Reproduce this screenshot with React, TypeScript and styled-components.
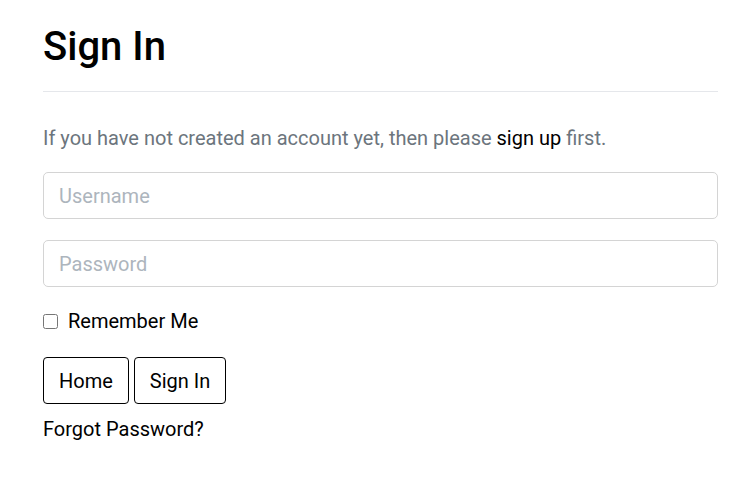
import React from "react";
import styled, { createGlobalStyle } from "styled-components";

const GlobalStyle = createGlobalStyle`
  body {
    margin: 0;
    background: #fff;
    font-family: Roboto, "Liberation Sans", sans-serif;
    font-size: 20px;
    line-height: 1.5;
    color: #212529;
  }
`;

const Page = styled.main`
  padding: 23px 28px 0 43px;
`;

const Header = styled.header`
  border-bottom: 1px solid #e5e7eb;
  padding-bottom: 20px;
`;

const Title = styled.h1`
  margin: 0;
  font-size: 40px;
  font-weight: 500;
  line-height: 1.2;
  color: #000;
`;

const Lead = styled.p`
  margin: 31px 0 19px;
  color: #6c757d;
`;

const Link = styled.a`
  color: #000;
  text-decoration: none;
`;

const Form = styled.form`
  display: flex;
  flex-direction: column;
`;

const Input = styled.input`
  box-sizing: border-box;
  height: 47px;
  padding: 0 15px;
  border: 1px solid #d4d4d4;
  border-radius: 5px;
  font: inherit;
  color: #212529;
  & + & {
    margin-top: 21px;
  }
  &::placeholder {
    color: #adb5bd;
  }
`;

const CheckRow = styled.label`
  display: flex;
  align-items: center;
  gap: 10px;
  margin-top: 19px;
  color: #000;
`;

const Check = styled.input`
  margin: 0;
  width: 15px;
  height: 15px;
`;

const Buttons = styled.div`
  display: flex;
  gap: 5px;
  margin-top: 21px;
`;

const Button = styled.button`
  box-sizing: border-box;
  height: 47px;
  padding: 0 15px;
  background: #fff;
  border: 1px solid #000;
  border-radius: 4px;
  font: inherit;
  color: #000;
`;

const Forgot = styled.a`
  margin-top: 10px;
  color: #000;
  text-decoration: none;
`;

export default function App() {
  return (
    <>
      <GlobalStyle />
      <Page>
        <Header>
          <Title>Sign In</Title>
        </Header>
        <Lead>
          If you have not created an account yet, then please{" "}
          <Link href="#">sign up</Link> first.
        </Lead>
        <Form onSubmit={(e) => e.preventDefault()}>
          <Input type="text" placeholder="Username" />
          <Input type="password" placeholder="Password" />
          <CheckRow>
            <Check type="checkbox" />
            Remember Me
          </CheckRow>
          <Buttons>
            <Button type="button">Home</Button>
            <Button type="submit">Sign In</Button>
          </Buttons>
          <Forgot href="#">Forgot Password?</Forgot>
        </Form>
      </Page>
    </>
  );
}
